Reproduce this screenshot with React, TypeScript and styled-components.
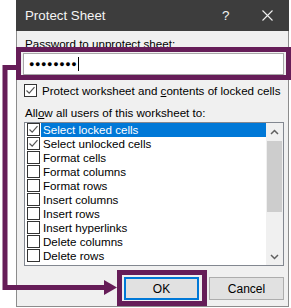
import React from "react";
import styled, { createGlobalStyle } from "styled-components";

const Global = createGlobalStyle`
  html, body { margin: 0; padding: 0; background: #ffffff; }
  body { font-family: "Liberation Sans", Arial, sans-serif; }
`;

const PURPLE = "#661d58";

const Page = styled.div`
  position: relative;
  width: 291px;
  height: 308px;
  padding-left: 16px;
  box-sizing: border-box;
  overflow: hidden;
`;

const Dialog = styled.div`
  width: 273px;
  height: 307px;
  box-sizing: border-box;
  border: 1px solid #8c8c8c;
  border-top: none;
  background: #f0f0f0;
  display: flex;
  flex-direction: column;
`;

const TitleBar = styled.div`
  flex-shrink: 0;
  height: 31px;
  background: #3d3d3d;
  display: flex;
  align-items: center;
  padding-left: 9px;
  color: #f4f4f4;
  font-size: 13.3px;
  margin: 0 -1px;
`;

const Title = styled.div`
  flex: 1;
`;

const Help = styled.div`
  width: 14px;
  font-size: 13.5px;
  margin-right: 26px;
`;

const Close = styled.div`
  width: 11px;
  margin-right: 16px;
  display: flex;
`;

const Body = styled.div`
  padding: 6px 4px 0 7px;
  display: flex;
  flex-direction: column;
  font-size: 11.6px;
  color: #000;
`;

const Label = styled.div<{ $mt?: number }>`
  flex-shrink: 0;
  height: 14px;
  line-height: 14px;
  margin-top: ${(p) => p.$mt ?? 0}px;
  padding-left: 1px;
  white-space: nowrap;
`;

const PasswordInput = styled.div`
  flex-shrink: 0;
  margin-top: 2px;
  margin-left: -1px;
  height: 22px;
  box-sizing: border-box;
  border: 1px solid #a8a8a8;
  background: #fff;
  display: flex;
  align-items: center;
  padding-left: 5px;
`;

const Dots = styled.span`
  font-size: 9px;
  letter-spacing: 0.6px;
  color: #000;
`;

const Caret = styled.span`
  width: 1px;
  height: 14px;
  background: #000;
  margin-left: 1px;
`;

const CheckLine = styled.div`
  flex-shrink: 0;
  margin-top: 8px;
  display: flex;
  align-items: center;
  height: 14px;
`;

const Box = styled.div`
  width: 13px;
  height: 13px;
  box-sizing: border-box;
  border: 1px solid #333;
  background: #fff;
  display: flex;
  align-items: center;
  justify-content: center;
  flex-shrink: 0;
`;

const CheckText = styled.span`
  margin-left: 5px;
  white-space: nowrap;
`;

const ListBox = styled.div`
  flex-shrink: 0;
  margin-top: 2px;
  height: 144px;
  box-sizing: border-box;
  border: 1px solid #828790;
  background: #fff;
  display: flex;
`;

const Rows = styled.div`
  flex: 1;
  display: flex;
  flex-direction: column;
`;

const Row = styled.div`
  height: 14px;
  display: flex;
  align-items: flex-start;
  padding-left: 2px;
`;

const RowText = styled.span<{ $sel?: boolean }>`
  flex: 1;
  height: 14px;
  line-height: 14px;
  margin-left: 1px;
  padding-left: 2px;
  background: ${(p) => (p.$sel ? "#0078d7" : "transparent")};
  color: ${(p) => (p.$sel ? "#fff" : "#000")};
  white-space: nowrap;
`;

const ScrollBar = styled.div`
  width: 17px;
  background: #f0f0f0;
  display: flex;
  flex-direction: column;
  align-items: center;
`;

const Arrow = styled.div`
  height: 17px;
  width: 17px;
  display: flex;
  align-items: center;
  justify-content: center;
`;

const Track = styled.div`
  flex: 1;
  width: 100%;
  display: flex;
  flex-direction: column;
`;

const Thumb = styled.div`
  margin-top: 1px;
  height: 71px;
  width: 15px;
  margin-left: 1px;
  background: #cdcdcd;
`;

const Buttons = styled.div`
  flex-shrink: 0;
  margin-top: 11px;
  display: flex;
  justify-content: flex-end;
  gap: 10px;
`;

const Button = styled.div<{ $primary?: boolean }>`
  width: 75px;
  height: 23px;
  box-sizing: border-box;
  border: ${(p) => (p.$primary ? "2px solid #0078d7" : "1px solid #adadad")};
  background: #e1e1e1;
  display: flex;
  align-items: center;
  justify-content: center;
  font-size: 12px;
  color: #000;
`;

const Frame = styled.div<{ $x: number; $y: number; $w: number; $h: number }>`
  position: absolute;
  left: ${(p) => p.$x}px;
  top: ${(p) => p.$y}px;
  width: ${(p) => p.$w}px;
  height: ${(p) => p.$h}px;
  box-sizing: border-box;
  border: 5px solid ${PURPLE};
  pointer-events: none;
`;

const Connector = styled.svg`
  position: absolute;
  left: 0;
  top: 0;
  pointer-events: none;
`;

const Check = ({ color = "#555" }: { color?: string }) => (
  <svg width="11" height="11" viewBox="0 0 11 11">
    <path d="M1.5 5.5 L4.2 8.2 L9.5 2.2" fill="none" stroke={color} strokeWidth="1.2" />
  </svg>
);

const items = [
  { t: "Select locked cells", c: true, s: true },
  { t: "Select unlocked cells", c: true },
  { t: "Format cells" },
  { t: "Format columns" },
  { t: "Format rows" },
  { t: "Insert columns" },
  { t: "Insert rows" },
  { t: "Insert hyperlinks" },
  { t: "Delete columns" },
  { t: "Delete rows" },
];

export default function App() {
  return (
    <>
      <Global />
      <Page>
        <Dialog>
          <TitleBar>
            <Title>Protect Sheet</Title>
            <Help>?</Help>
            <Close>
              <svg width="11" height="11" viewBox="0 0 11 11">
                <path d="M0.5 0.5 L10.5 10.5 M10.5 0.5 L0.5 10.5" stroke="#f0f0f0" strokeWidth="1.1" />
              </svg>
            </Close>
          </TitleBar>
          <Body>
            <Label $mt={0}>
              <u>P</u>assword to unprotect sheet:
            </Label>
            <PasswordInput>
              <Dots>●●●●●●●●</Dots>
              <Caret />
            </PasswordInput>
            <CheckLine>
              <Box>
                <Check />
              </Box>
              <CheckText>
                Protect worksheet and <u>c</u>ontents of locked cells
              </CheckText>
            </CheckLine>
            <Label $mt={9}>
              All<u>o</u>w all users of this worksheet to:
            </Label>
            <ListBox>
              <Rows>
                {items.map((it) => (
                  <Row key={it.t}>
                    <Box>{it.c ? <Check /> : null}</Box>
                    <RowText $sel={it.s}>{it.t}</RowText>
                  </Row>
                ))}
              </Rows>
              <ScrollBar>
                <Arrow>
                  <svg width="9" height="6" viewBox="0 0 9 6">
                    <path d="M1 5 L4.5 1.5 L8 5" fill="none" stroke="#606060" strokeWidth="1.5" />
                  </svg>
                </Arrow>
                <Track>
                  <Thumb />
                </Track>
                <Arrow>
                  <svg width="9" height="6" viewBox="0 0 9 6">
                    <path d="M1 1 L4.5 4.5 L8 1" fill="none" stroke="#606060" strokeWidth="1.5" />
                  </svg>
                </Arrow>
              </ScrollBar>
            </ListBox>
            <Buttons>
              <Button $primary>OK</Button>
              <Button>Cancel</Button>
            </Buttons>
          </Body>
        </Dialog>
        <Frame $x={16} $y={47} $w={275} $h={33} />
        <Frame $x={117} $y={270} $w={90} $h={36} />
        <Connector width="291" height="308" viewBox="0 0 291 308">
          <path d="M16 67.5 H5 V287.5 H106" fill="none" stroke={PURPLE} strokeWidth="5" />
          <path d="M104 280 L117 287.5 L104 295 Z" fill={PURPLE} />
        </Connector>
      </Page>
    </>
  );
}
